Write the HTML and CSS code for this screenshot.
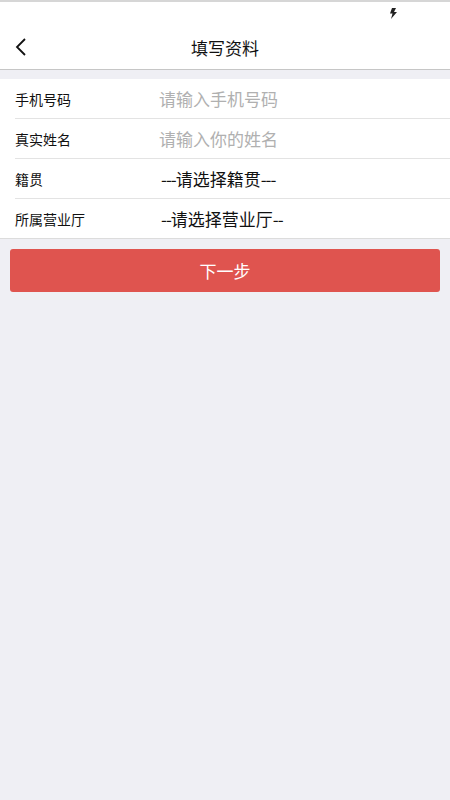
FILE: index.html
```html
<!DOCTYPE html>
<html lang="zh-CN">
<head>
  <meta charset="UTF-8">
  <title>填写资料</title>
  <link rel="stylesheet" href="styles.css">
</head>
<body>
  <div class="status-bar">
    <svg class="bolt" width="8" height="11" viewBox="0 0 8 11">
      <path d="M3 0h4L5 4h3L2 11l1.5-5.5H1z" fill="#222"/>
    </svg>
  </div>
  <header class="nav">
    <svg class="back" width="14" height="20" viewBox="0 0 14 20">
      <path d="M11 2L3 10l8 8" fill="none" stroke="#111" stroke-width="1.8"/>
    </svg>
    <h1>填写资料</h1>
  </header>

  <form class="form">
    <div class="list">
      <div class="row">
        <label>手机号码</label>
        <input type="text" placeholder="请输入手机号码">
      </div>
      <div class="row">
        <label>真实姓名</label>
        <input type="text" placeholder="请输入你的姓名">
      </div>
      <div class="row">
        <label>籍贯</label>
        <span class="pick"><span class="dash">---</span>请选择籍贯<span class="dash">---</span></span>
      </div>
      <div class="row">
        <label>所属营业厅</label>
        <span class="pick"><span class="dash">--</span>请选择营业厅<span class="dash">--</span></span>
      </div>
    </div>
    <button type="button" class="next">下一步</button>
  </form>
</body>
</html>
```

FILE: styles.css
```css
body {
  margin: 0;
  background-color: #efeff4;
  font-family: "Noto Sans CJK SC", "Noto Sans", sans-serif;
  color: #111;
}

.status-bar {
  height: 23px;
  background-color: #fff;
  border-top: 2px solid #d6d6d6;
  position: relative;
}

.bolt {
  position: absolute;
  left: 389px;
  top: 6px;
}

.nav {
  height: 44px;
  background-color: #fff;
  border-bottom: 1px solid #c6c6c6;
  display: flex;
  align-items: center;
  justify-content: center;
  position: relative;
}

.nav h1 {
  margin: 0;
  font-size: 17px;
  font-weight: normal;
}

.back {
  position: absolute;
  left: 14px;
  top: 12px;
}

.form {
  padding-top: 9px;
}

.list {
  background-color: #fff;
  border-bottom: 1px solid #dcdcdc;
}

.row {
  height: 39px;
  margin-left: 15px;
  display: flex;
  align-items: center;
  border-bottom: 1px solid #e3e3e3;
}

.row:last-child {
  border-bottom: none;
}

.row label {
  width: 144px;
  font-size: 14px;
  color: #111;
}

.row input {
  border: none;
  outline: none;
  padding: 0;
  font-family: inherit;
  font-size: 17px;
  flex: 1;
  background: transparent;
}

.row input::placeholder {
  color: #b0b0b0;
}

.pick {
  font-size: 17px;
  color: #111;
  padding-left: 2px;
}

.dash {
  letter-spacing: -1px;
}

.next {
  display: block;
  margin: 10px 10px 0;
  width: 430px;
  height: 43px;
  border: none;
  border-radius: 3px;
  background-color: #df544f;
  color: #fff;
  font-family: inherit;
  font-size: 17px;
}
```
